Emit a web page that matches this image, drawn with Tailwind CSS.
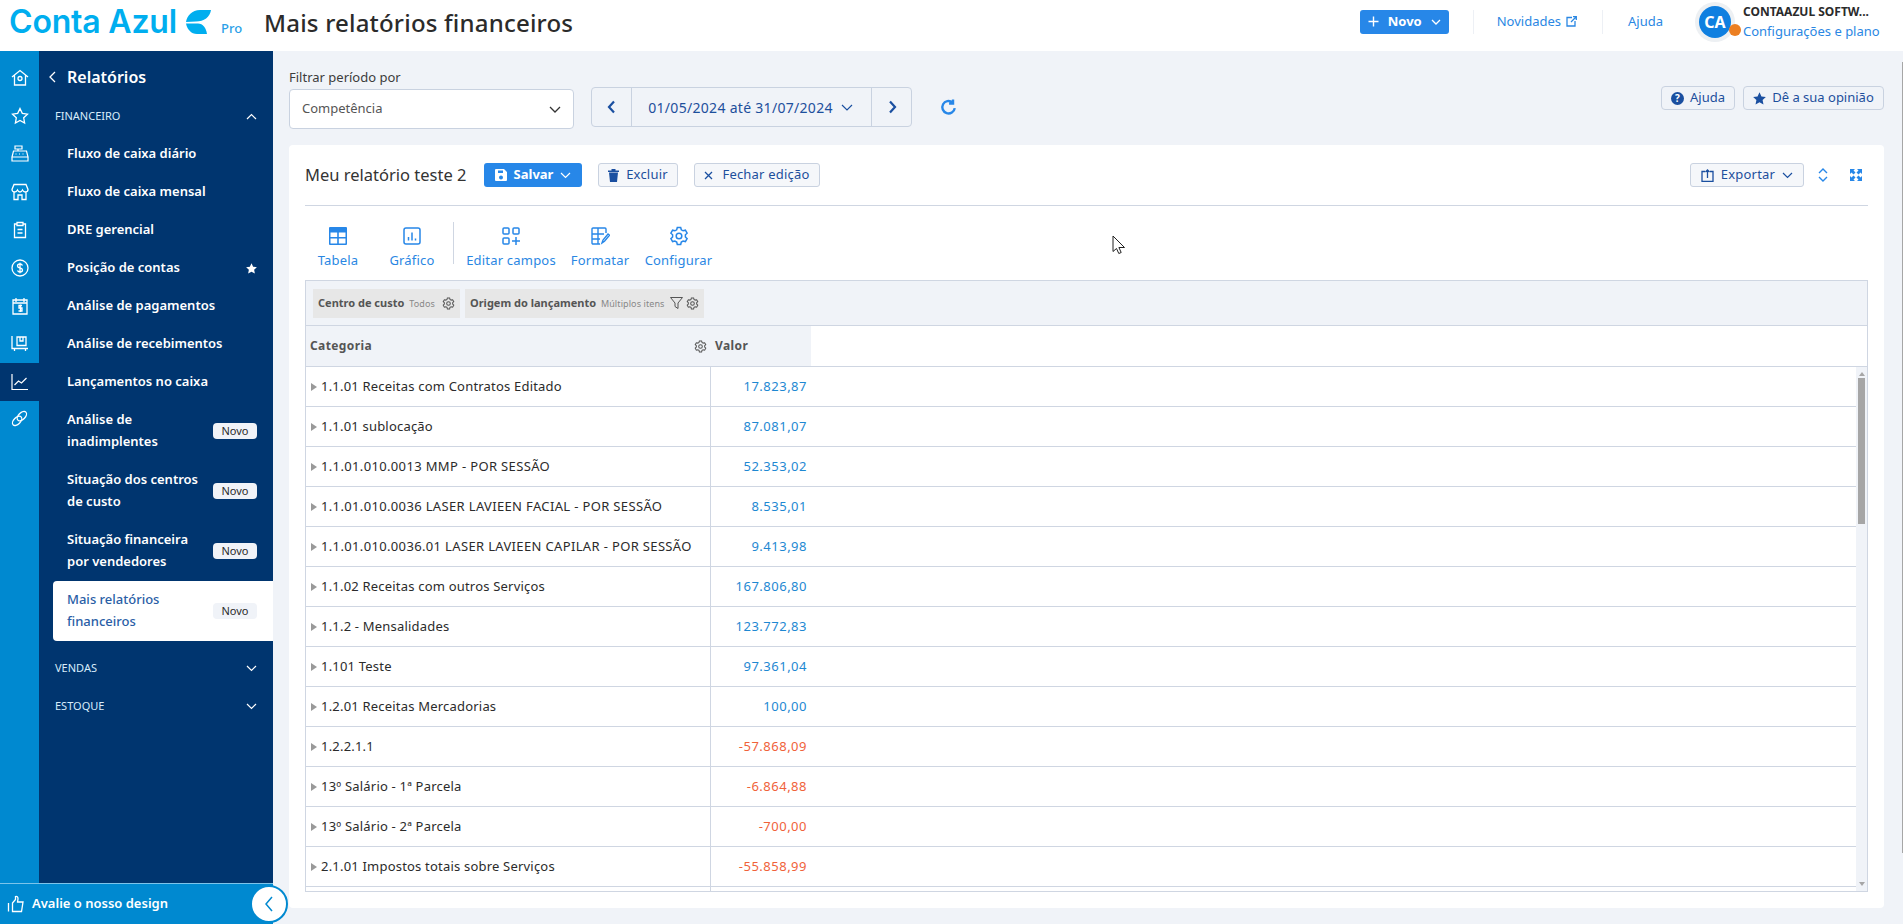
<!DOCTYPE html>
<html lang="pt-BR">
<head>
    <meta charset="UTF-8">
    <title>Mais relatórios financeiros</title>
    <script src="https://cdn.jsdelivr.net/npm/@tailwindcss/browser@4"></script>
</head>
<body class="h-[924px] w-[1903px] overflow-hidden bg-[#f0f3f8] font-['Noto_Sans',sans-serif] text-[13px] relative">

    <!-- topo -->
    <header class="h-[51px] bg-white flex items-center pl-[9px] pr-[19px]">
        <span class="font-['Inter',sans-serif] font-semibold text-[32px] leading-none text-[#00aeef] tracking-[-0.2px] w-[177px] whitespace-nowrap mb-[8px]">Conta Azul</span>
        <svg class="w-[25px] h-[24px] mb-[8px]" viewBox="0 0 25 24" fill="#00aeef"><path d="M0 12C1 6 6 0 14 0H25C24 7 18 11.500 10 11.500z"/><path d="M0 13.500H12C17 13.500 20 18 21 24H11C5 24 1 19 0 13.500z"/></svg>
        <span class="text-[13px] font-medium text-[#2a9fe8] ml-[10px] mt-[7px] w-[43px]">Pro</span>
        <h1 class="text-[24px] leading-none font-medium text-[#2b2b2b] tracking-[0.2px] whitespace-nowrap mb-[5px]">Mais relatórios financeiros</h1>
        <div class="ml-auto flex items-center mb-[8px]">
            <button class="w-[89px] h-[24px] rounded-[3px] bg-[#2787e8] text-white font-bold text-[13px] flex items-center justify-center gap-[9px]">
                <svg class="w-[11px] h-[11px]" viewBox="0 0 11 11" fill="none" stroke="white" stroke-width="1.4"><path d="M5.5 0.5v10M0.5 5.5h10"/></svg>
                Novo
                <svg class="w-[10px] h-[6px]" viewBox="0 0 10 6" fill="none" stroke="white" stroke-width="1.3"><path d="M1 1l4 4 4-4"/></svg>
            </button>
            <div class="w-px h-[24px] bg-[#edf0f5] ml-[24px]"></div>
            <a class="ml-[23px] text-[#2a87e3] flex items-center gap-[5px]">Novidades
                <svg class="w-[11px] h-[11px]" viewBox="0 0 11 11" fill="none" stroke="#2a87e3" stroke-width="1.3"><path d="M6 1.500H1v8.500h8V5M5 6l5-5M7 .7h3.300V4"/></svg>
            </a>
            <div class="w-px h-[24px] bg-[#edf0f5] ml-[25px]"></div>
            <a class="ml-[25px] text-[#2a87e3]">Ajuda</a>
            <div class="ml-[32px] w-[40px] h-[40px] rounded-full bg-[#edf0f3] flex items-center justify-center relative">
                <div class="w-[32px] h-[32px] rounded-full bg-[#0f7fe0] text-white font-bold text-[16px] flex items-center justify-center">CA</div>
                <span class="absolute right-[-6px] top-[22px] w-[12px] h-[12px] rounded-full bg-[#ec7f22]"></span>
            </div>
            <div class="ml-[8px] w-[141px]">
                <div class="font-bold text-[12px] leading-[16px] text-[#2b2b2b] whitespace-nowrap">CONTAAZUL SOFTW...</div>
                <div class="text-[#2a87e3] leading-[18px] mt-[2px] whitespace-nowrap">Configurações e plano</div>
            </div>
        </div>
    </header>

    <div class="flex h-[873px]">
        <!-- barra de icones -->
        <aside class="w-[273px] relative flex">
            <nav class="w-[39px] bg-[#0089d0] flex flex-col pt-[8px]">
                <div class="h-[38px] flex items-center justify-center">
                    <svg class="w-[18px] h-[18px]" viewBox="0 0 18 18" fill="none" stroke="white" stroke-width="1.300"><path d="M1 8l8-6.500L17 8M3.500 6.500V16h11V6.500"/><circle cx="9" cy="9.500" r="2"/></svg>
                </div>
                <div class="h-[38px] flex items-center justify-center">
                    <svg class="w-[18px] h-[18px]" viewBox="0 0 18 18" fill="none" stroke="white" stroke-width="1.300"><path d="M9 1.500l2.300 4.900 5.200.700-3.800 3.700.900 5.300L9 13.500l-4.600 2.600.900-5.300-3.800-3.700 5.200-.700z"/></svg>
                </div>
                <div class="h-[38px] flex items-center justify-center">
                    <svg class="w-[18px] h-[18px]" viewBox="0 0 18 18" fill="none" stroke="white" stroke-width="1.200"><path d="M4 1h7v3H4zM7 4v2M2.500 6h13L17 12H1zM1 12h16v4H1zM4.500 9h1M8 9h1M11.500 9h1"/></svg>
                </div>
                <div class="h-[38px] flex items-center justify-center">
                    <svg class="w-[18px] h-[18px]" viewBox="0 0 18 18" fill="none" stroke="white" stroke-width="1.300"><path d="M3 1.500h12L17 6.500c0 1.500-1 2.500-2.700 2.500S12 8 11.500 7c-.5 1-1.200 2-2.500 2s-2-1-2.500-2C6 8 5.300 9 3.700 9S1 8 1 6.500zM3 9v7.500h4V12h4v4.500h4V9"/></svg>
                </div>
                <div class="h-[38px] flex items-center justify-center">
                    <svg class="w-[18px] h-[18px]" viewBox="0 0 18 18" fill="none" stroke="white" stroke-width="1.300"><path d="M6 3H3.500v13.500h11V3H12M6 1.500h6v3H6zM6.500 8.500h5M6.500 12h5"/></svg>
                </div>
                <div class="h-[38px] flex items-center justify-center">
                    <svg class="w-[18px] h-[18px]" viewBox="0 0 18 18" fill="none" stroke="white" stroke-width="1.300"><circle cx="9" cy="9" r="8"/><path d="M11.500 6.500C11 5.500 10 5 9 5 7.500 5 6.500 6 6.500 7s1 1.700 2.500 2 2.500 1 2.500 2-1 2-2.500 2c-1 0-2-.5-2.500-1.500M9 3.800v10.400"/></svg>
                </div>
                <div class="h-[38px] flex items-center justify-center">
                    <svg class="w-[18px] h-[18px]" viewBox="0 0 18 18" fill="none" stroke="white" stroke-width="1.300"><path d="M2 3h14v14H2zM5 1v4M13 1v4M2 6h14M11 8.500H8v2.500h3v3H7.500M9.500 7.500v7.500"/></svg>
                </div>
                <div class="h-[38px] flex items-center justify-center">
                    <svg class="w-[18px] h-[18px]" viewBox="0 0 18 18" fill="none" stroke="white" stroke-width="1.300"><path d="M1 1v12.500h16M6 2h9v8.500H6zM9 2v4h3V2M3.500 14v2M14.500 14v2"/></svg>
                </div>
                <div class="h-[38px] bg-[#00356f] flex items-center justify-center">
                    <svg class="w-[18px] h-[18px]" viewBox="0 0 18 18" fill="none" stroke="white" stroke-width="1.200"><path d="M1 1v15.500h16M3.500 12l4-4 3 2 5-5"/></svg>
                </div>
                <div class="h-[34px] flex items-center justify-center">
                    <svg class="w-[17px] h-[17px]" viewBox="0 0 18 18" fill="none" stroke="white" stroke-width="1.400"><ellipse cx="6.500" cy="11.500" rx="6" ry="3.500" transform="rotate(-45 6.500 11.500)"/><ellipse cx="11.500" cy="6.500" rx="6" ry="3.500" transform="rotate(-45 11.500 6.500)"/></svg>
                </div>
            </nav>

            <!-- menu -->
            <div class="w-[234px] bg-[#00356f] text-white font-semibold">
                <div class="h-[52px] flex items-center pl-[9px]">
                    <svg class="w-[9px] h-[12px]" viewBox="0 0 9 12" fill="none" stroke="white" stroke-width="1.300"><path d="M7 1L2 6l5 5"/></svg>
                    <span class="ml-[10px] text-[16px]">Relatórios</span>
                </div>
                <div class="h-[26px] flex items-center justify-between pl-[16px] pr-[16px] text-[11px] font-normal text-[#d8ecfb]">FINANCEIRO
                    <svg class="w-[11px] h-[7px]" viewBox="0 0 11 7" fill="none" stroke="white" stroke-width="1.200"><path d="M1 6l4.500-4.500L10 6"/></svg>
                </div>
                <div class="h-[38px] mt-[6px] flex items-center pl-[28px]">Fluxo de caixa diário</div>
                <div class="h-[38px] flex items-center pl-[28px]">Fluxo de caixa mensal</div>
                <div class="h-[38px] flex items-center pl-[28px]">DRE gerencial</div>
                <div class="h-[38px] flex items-center justify-between pl-[28px] pr-[16px]">Posição de contas
                    <svg class="w-[11px] h-[11px]" viewBox="0 0 18 18" fill="white"><path d="M9 .5l2.700 5.600 6.100.8-4.500 4.200 1.200 6.100L9 14.200l-5.500 3 1.200-6.100L.2 6.900l6.100-.8z"/></svg>
                </div>
                <div class="h-[38px] flex items-center pl-[28px]">Análise de pagamentos</div>
                <div class="h-[38px] flex items-center pl-[28px]">Análise de recebimentos</div>
                <div class="h-[38px] flex items-center pl-[28px]">Lançamentos no caixa</div>
                <div class="h-[60px] flex items-center justify-between pl-[28px] pr-[16px] leading-[22px]">
                    <span class="-mt-[2px]">Análise de<br>inadimplentes</span>
                    <span class="w-[44px] h-[16px] rounded-[4px] bg-[#f0f3f8] text-[#2b2b2b] text-[11px] font-normal flex items-center justify-center">Novo</span>
                </div>
                <div class="h-[60px] flex items-center justify-between pl-[28px] pr-[16px] leading-[22px]">
                    <span class="-mt-[2px]">Situação dos centros<br>de custo</span>
                    <span class="w-[44px] h-[16px] rounded-[4px] bg-[#f0f3f8] text-[#2b2b2b] text-[11px] font-normal flex items-center justify-center">Novo</span>
                </div>
                <div class="h-[60px] flex items-center justify-between pl-[28px] pr-[16px] leading-[22px]">
                    <span class="-mt-[2px]">Situação financeira<br>por vendedores</span>
                    <span class="w-[44px] h-[16px] rounded-[4px] bg-[#f0f3f8] text-[#2b2b2b] text-[11px] font-normal flex items-center justify-center">Novo</span>
                </div>
                <div class="h-[60px] ml-[14px] rounded-l-[4px] bg-white text-[#2a5ea6] font-medium flex items-center justify-between pl-[14px] pr-[16px] leading-[22px]">
                    <span class="-mt-[2px]">Mais relatórios<br>financeiros</span>
                    <span class="w-[44px] h-[16px] rounded-[4px] bg-[#f0f3f8] text-[#2b2b2b] text-[11px] font-normal flex items-center justify-center">Novo</span>
                </div>
                <div class="h-[38px] mt-[8px] flex items-center justify-between pl-[16px] pr-[16px] text-[11px] font-normal text-[#d8ecfb]">VENDAS
                    <svg class="w-[11px] h-[7px]" viewBox="0 0 11 7" fill="none" stroke="white" stroke-width="1.200"><path d="M1 1l4.500 4.500L10 1"/></svg>
                </div>
                <div class="h-[38px] flex items-center justify-between pl-[16px] pr-[16px] text-[11px] font-normal text-[#d8ecfb]">ESTOQUE
                    <svg class="w-[11px] h-[7px]" viewBox="0 0 11 7" fill="none" stroke="white" stroke-width="1.200"><path d="M1 1l4.500 4.500L10 1"/></svg>
                </div>
            </div>

            <!-- rodape do menu -->
            <div class="absolute left-0 bottom-0 w-[273px] h-[41px] bg-[#0089d0] border-t border-[#7cc4ea] flex items-center pl-[7px] text-white font-semibold">
                <svg class="w-[18px] h-[18px]" viewBox="0 0 18 18" fill="none" stroke="white" stroke-width="1.300"><path d="M1.500 8v8.500M5.500 8l3-3.500V1.500c1.500-.5 2.500.5 2.500 2S10.500 6.500 10.500 7H16l-1.500 9.500H5.500z"/></svg>
                <span class="ml-[7px]">Avalie o nosso design</span>
                <div class="absolute left-[250px] top-[1px] w-[38px] h-[38px] rounded-full bg-white border-2 border-[#0089d0] flex items-center justify-center">
                    <svg class="w-[10px] h-[18px]" viewBox="0 0 10 18" fill="none" stroke="#0089d0" stroke-width="1.500"><path d="M8 2L2 9l6 7"/></svg>
                </div>
            </div>
        </aside>

        <!-- conteudo -->
        <main class="w-[1630px] pl-[16px] pt-[17px]">
            <div class="w-[1595px] h-[77px] flex items-start">
                <div class="w-[285px]">
                    <label class="block text-[#3c3c3c] leading-[18px]">Filtrar período por</label>
                    <div class="mt-[3px] h-[40px] bg-white border border-[#c9d2e0] rounded-[4px] flex items-center justify-between pl-[12px] pr-[12px] text-[#555]">Competência
                        <svg class="w-[12px] h-[7px]" viewBox="0 0 12 7" fill="none" stroke="#333" stroke-width="1.300"><path d="M1 1l5 5 5-5"/></svg>
                    </div>
                </div>
                <div class="ml-[17px] mt-[19px] w-[321px] h-[40px] border border-[#c9d2e0] rounded-[4px] flex items-center text-[#1d4f9c]">
                    <div class="w-[40px] h-full border-r border-[#c9d2e0] flex items-center justify-center">
                        <svg class="w-[9px] h-[14px]" viewBox="0 0 9 14" fill="none" stroke="#1a4fa0" stroke-width="2.200"><path d="M7 1.500L2 7l5 5.500"/></svg>
                    </div>
                    <div class="flex-1 h-full flex items-center justify-center gap-[8px] text-[14px] tracking-[0.3px] whitespace-nowrap pr-[2px]">01/05/2024 até 31/07/2024
                        <svg class="w-[12px] h-[7px]" viewBox="0 0 12 7" fill="none" stroke="#1a4fa0" stroke-width="1.200"><path d="M1 1l5 5 5-5"/></svg>
                    </div>
                    <div class="w-[40px] h-full border-l border-[#c9d2e0] flex items-center justify-center pl-[2px]">
                        <svg class="w-[9px] h-[14px]" viewBox="0 0 9 14" fill="none" stroke="#1a4fa0" stroke-width="2.200"><path d="M2 1.500L7 7l-5 5.500"/></svg>
                    </div>
                </div>
                <svg class="ml-[28px] mt-[31px] w-[17px] h-[17px]" viewBox="0 0 15 15" fill="none" stroke="#2787e8" stroke-width="2.100"><path d="M13 8a5.500 5.500 0 1 1-2-5M11.500 .5v3.500H8"/></svg>
                <div class="ml-auto mt-[18px] flex gap-[8px] text-[#1d4f9c]">
                    <button class="w-[74px] h-[24px] border border-[#c9d2e0] rounded-[4px] flex items-center justify-center gap-[6px]">
                        <svg class="w-[13px] h-[13px]" viewBox="0 0 13 13"><circle cx="6.500" cy="6.500" r="6.500" fill="#1a4fa0"/><text x="6.500" y="10" text-anchor="middle" font-size="10" font-weight="700" fill="white">?</text></svg>
                        Ajuda
                    </button>
                    <button class="w-[141px] h-[24px] border border-[#c9d2e0] rounded-[4px] flex items-center justify-center gap-[6px]">
                        <svg class="w-[13px] h-[13px]" viewBox="0 0 18 18" fill="#1a4fa0"><path d="M9 .5l2.700 5.600 6.100.8-4.500 4.200 1.200 6.100L9 14.200l-5.500 3 1.200-6.100L.2 6.900l6.100-.8z"/></svg>
                        Dê a sua opinião
                    </button>
                </div>
            </div>

            <!-- cartao do relatorio -->
            <section class="w-[1595px] h-[763px] bg-white rounded-[4px] px-[16px]">
                <div class="h-[61px] border-b border-[#cfd6e2] flex items-center">
                    <h2 class="text-[16.500px] text-[#333] w-[179px] whitespace-nowrap">Meu relatório teste 2</h2>
                    <button class="w-[98px] h-[24px] rounded-[3px] bg-[#2787e8] text-white font-bold flex items-center justify-center gap-[7px]">
                        <svg class="w-[12px] h-[12px]" viewBox="0 0 12 12" fill="white"><path fill-rule="evenodd" d="M1 0h8l3 3v8a1 1 0 0 1-1 1H1a1 1 0 0 1-1-1V1a1 1 0 0 1 1-1zm2 1.500V4h5V1.500zM6 6.500a2 2 0 1 0 0 4 2 2 0 0 0 0-4z"/></svg>
                        Salvar
                        <svg class="w-[11px] h-[7px]" viewBox="0 0 11 7" fill="none" stroke="white" stroke-width="1.200"><path d="M1 1l4.500 4.500L10 1"/></svg>
                    </button>
                    <button class="ml-[16px] w-[80px] h-[24px] border border-[#c9d2e0] bg-[#f5f7fa] rounded-[3px] text-[#1d4f9c] tracking-[0.2px] flex items-center justify-center gap-[7px]">
                        <svg class="w-[11px] h-[13px]" viewBox="0 0 11 13" fill="#1a4fa0"><path d="M0 1.500h11v1.500H0zM3.500 0h4v1.500h-4zM1 3.500h9L9 13H2z"/></svg>
                        Excluir
                    </button>
                    <button class="ml-[16px] w-[126px] h-[24px] border border-[#c9d2e0] bg-[#f5f7fa] rounded-[3px] text-[#1d4f9c] tracking-[0.2px] flex items-center justify-center gap-[9px]">
                        <svg class="w-[9px] h-[9px]" viewBox="0 0 9 9" fill="none" stroke="#1a4fa0" stroke-width="1.300"><path d="M1 1l7 7M8 1L1 8"/></svg>
                        Fechar edição
                    </button>
                    <button class="ml-auto w-[114px] h-[24px] border border-[#c9d2e0] bg-[#f5f7fa] rounded-[3px] text-[#1d4f9c] tracking-[0.2px] flex items-center justify-center gap-[7px]">
                        <svg class="w-[13px] h-[13px]" viewBox="0 0 13 13" fill="none" stroke="#1a4fa0" stroke-width="1.300"><path d="M4 2.500H1v10h11v-10H9M6.500 9V1M4.500 3l2-2 2 2"/></svg>
                        Exportar
                        <svg class="w-[11px] h-[7px]" viewBox="0 0 11 7" fill="none" stroke="#1a4fa0" stroke-width="1.200"><path d="M1 1l4.500 4.500L10 1"/></svg>
                    </button>
                    <svg class="ml-[14px] w-[10px] h-[14px]" viewBox="0 0 10 14" fill="none" stroke="#2787e8" stroke-width="1.400"><path d="M1 5l4-4 4 4M1 9l4 4 4-4"/></svg>
                    <svg class="ml-[22px] mr-[6px] w-[12px] h-[12px]" viewBox="0 0 12 12" fill="#2787e8"><path d="M0 0h5L3.500 1.500 5.500 3.500 3.500 5.500 1.500 3.500 0 5zM12 0v5l-1.500-1.500-2 2-2-2 2-2L7 0zM0 12V7l1.500 1.500 2-2 2 2-2 2L5 12zM12 12H7l1.500-1.500-2-2 2-2 2 2L12 7z"/></svg>
                </div>

                <!-- barra de ferramentas -->
                <div class="h-[74px] pt-[20px] flex text-[#2a87e3] tracking-[0.2px]">
                    <div class="w-[66px] flex flex-col items-center">
                        <svg class="w-[20px] h-[20px]" viewBox="0 0 20 20"><path fill="#2787e8" fill-rule="evenodd" d="M2 1h16a1 1 0 0 1 1 1v16a1 1 0 0 1-1 1H2a1 1 0 0 1-1-1V2a1 1 0 0 1 1-1zm.500 5.500v4.500h6.700V6.500zm8.300 0v4.500h6.700V6.500zM2.500 12.500v5h6.700v-5zm8.300 0v5h6.700v-5z"/></svg>
                        <span class="mt-[5px] leading-[18px]">Tabela</span>
                    </div>
                    <div class="w-[82px] flex flex-col items-center">
                        <svg class="w-[20px] h-[20px]" viewBox="0 0 20 20" fill="none" stroke="#2787e8" stroke-width="1.500"><rect x="2" y="2" width="16" height="16" rx="2"/><path d="M6.500 11v3.500M10 6.500v8M13.500 12.500v2"/></svg>
                        <span class="mt-[5px] leading-[18px]">Gráfico</span>
                    </div>
                    <div class="w-px h-[42px] bg-[#cfd6e2] -mt-[4px]"></div>
                    <div class="ml-[13px] w-[88px] flex flex-col items-center">
                        <svg class="w-[20px] h-[20px]" viewBox="0 0 20 20" fill="none" stroke="#2787e8" stroke-width="1.500"><rect x="2" y="2" width="6" height="6" rx="1"/><rect x="12" y="2" width="6" height="6" rx="1"/><rect x="2" y="12" width="6" height="6" rx="1"/><path d="M15 11v8M11 15h8"/></svg>
                        <span class="mt-[5px] leading-[18px] whitespace-nowrap">Editar campos</span>
                    </div>
                    <div class="ml-[16px] w-[58px] flex flex-col items-center">
                        <svg class="w-[20px] h-[20px]" viewBox="0 0 20 20" fill="none" stroke="#2787e8" stroke-width="1.400"><path d="M10 18H3a1 1 0 0 1-1-1V3a1 1 0 0 1 1-1h12a1 1 0 0 1 1 1v4M2 8h12M8 2v16M2 13h8M12 17l1-3 5-6 1.500 1.300-5 6z"/></svg>
                        <span class="mt-[5px] leading-[18px]">Formatar</span>
                    </div>
                    <div class="ml-[17px] w-[65px] flex flex-col items-center">
                        <svg class="w-[20px] h-[20px]" viewBox="0 0 20 20" fill="none" stroke="#2787e8" stroke-width="1.500"><path d="M8.300 1.500h3.400l.6 2.300 1.800 1 2.300-.6 1.700 3-1.700 1.600v2.200l1.700 1.600-1.700 3-2.300-.6-1.800 1-.6 2.500H8.300l-.6-2.500-1.800-1-2.300.6-1.700-3L3.600 11V8.800L1.900 7.200l1.700-3 2.300.6 1.800-1z"/><circle cx="10" cy="10" r="2.800"/></svg>
                        <span class="mt-[5px] leading-[18px]">Configurar</span>
                    </div>
                </div>

                <!-- tabela dinamica -->
                <div class="w-[1563px] border border-[#cfd6e2] relative">
                    <div class="h-[45px] bg-[#f0f3f8] border-b border-[#cfd6e2] flex items-center pl-[7px] gap-[5px] text-[#555]">
                        <div class="h-[29px] w-[147px] bg-[#e7e7e7] flex items-center justify-between px-[5px]">
                            <span class="font-bold text-[11px]">Centro de custo <span class="font-normal text-[#888] text-[9px] tracking-[0.1px] ml-[2px]">Todos</span></span>
                            <svg class="w-[13px] h-[13px]" viewBox="0 0 20 20" fill="none" stroke="#555" stroke-width="1.600"><path d="M8.300 1.500h3.400l.6 2.300 1.800 1 2.300-.6 1.700 3-1.700 1.600v2.200l1.700 1.600-1.700 3-2.300-.6-1.800 1-.6 2.500H8.300l-.6-2.500-1.800-1-2.300.6-1.700-3L3.600 11V8.800L1.900 7.200l1.700-3 2.300.6 1.800-1z"/><circle cx="10" cy="10" r="2.800"/></svg>
                        </div>
                        <div class="h-[29px] w-[239px] bg-[#e7e7e7] flex items-center px-[5px]">
                            <span class="font-bold text-[11px] whitespace-nowrap">Origem do lançamento <span class="font-normal text-[#888] text-[9px] tracking-[0.1px] ml-[2px]">Múltiplos itens</span></span>
                            <svg class="ml-auto w-[13px] h-[12px]" viewBox="0 0 13 12" fill="none" stroke="#555" stroke-width="1"><path d="M.5.500h12L8 6v5.500L5 9.500V6z"/></svg>
                            <svg class="ml-[3px] w-[13px] h-[13px]" viewBox="0 0 20 20" fill="none" stroke="#555" stroke-width="1.600"><path d="M8.300 1.500h3.400l.6 2.300 1.800 1 2.300-.6 1.700 3-1.700 1.600v2.200l1.700 1.600-1.700 3-2.300-.6-1.800 1-.6 2.500H8.300l-.6-2.500-1.800-1-2.300.6-1.700-3L3.600 11V8.800L1.900 7.200l1.700-3 2.300.6 1.800-1z"/><circle cx="10" cy="10" r="2.800"/></svg>
                        </div>
                    </div>
                    <div class="h-[41px] border-b border-[#cfd6e2] flex">
                        <div class="w-[505px] bg-[#f0f3f8] flex items-center justify-between pl-[4px] pr-[4px] font-bold text-[12px] tracking-[0.4px] text-[#555]">
                            <span>Categoria</span>
                            <span class="flex items-center gap-[8px]">
                                <svg class="w-[13px] h-[13px]" viewBox="0 0 20 20" fill="none" stroke="#555" stroke-width="1.600"><path d="M8.300 1.500h3.400l.6 2.300 1.800 1 2.300-.6 1.700 3-1.700 1.600v2.200l1.700 1.600-1.700 3-2.300-.6-1.800 1-.6 2.500H8.300l-.6-2.500-1.800-1-2.300.6-1.700-3L3.600 11V8.800L1.900 7.200l1.700-3 2.300.6 1.800-1z"/><circle cx="10" cy="10" r="2.800"/></svg>
                                <span class="w-[92px]">Valor</span>
                            </span>
                        </div>
                    </div>
                    <div id="linhas" class="pr-[11px] h-[524px] relative"></div>
                    <!-- barra de rolagem -->
                    <div class="absolute right-0 bottom-0 top-[86px] w-[11px] bg-[#f0f3f8]">
                        <div class="absolute left-[3px] top-[5px] w-0 h-0 border-x-[3px] border-x-transparent border-b-[4px] border-b-[#a6a6a6]"></div>
                        <div class="absolute left-[2px] top-[11px] w-[7px] h-[146px] bg-[#a6a6a6]"></div>
                        <div class="absolute left-[3px] bottom-[5px] w-0 h-0 border-x-[3px] border-x-transparent border-t-[4px] border-t-[#a6a6a6]"></div>
                    </div>
                </div>
            </section>
        </main>
    </div>

    <!-- rolagem da pagina -->
    <div class="absolute right-0 top-[62px] w-px h-[791px] bg-[#a6a6a6]"></div>
    <!-- cursor do mouse -->
    <svg class="absolute left-[1112px] top-[235px] w-[14px] h-[20px]" viewBox="0 0 14 20" fill="white" stroke="#222" stroke-width="1"><path d="M1 1v15.500l3.500-3 2.300 5 2.400-1-2.300-5H12.500z"/></svg>

    <script>
        const linhas = [
            ['1.1.01 Receitas com Contratos Editado', '17.823,87'],
            ['1.1.01 sublocação', '87.081,07'],
            ['1.1.01.010.0013 MMP - POR SESSÃO', '52.353,02', 'tracking-[0.35px]'],
            ['1.1.01.010.0036 LASER LAVIEEN FACIAL - POR SESSÃO', '8.535,01', 'tracking-[0.35px]'],
            ['1.1.01.010.0036.01 LASER LAVIEEN CAPILAR - POR SESSÃO', '9.413,98', 'tracking-[0.35px]'],
            ['1.1.02 Receitas com outros Serviços', '167.806,80'],
            ['1.1.2 - Mensalidades', '123.772,83'],
            ['1.101 Teste', '97.361,04'],
            ['1.2.01 Receitas Mercadorias', '100,00'],
            ['1.2.2.1.1', '-57.868,09'],
            ['13º Salário - 1ª Parcela', '-6.864,88'],
            ['13º Salário - 2ª Parcela', '-700,00'],
            ['2.1.01 Impostos totais sobre Serviços', '-55.858,99'],
            ['', '']
        ];
        const corpo = document.getElementById('linhas');
        linhas.forEach(([nome, valor, espaco = 'tracking-[0.2px]'], i) => {
            const linha = document.createElement('div');
            linha.className = i === 13 ? 'h-[4px] flex' : 'h-[40px] border-b border-[#cfd6e2] flex';
            const cor = valor.startsWith('-') ? 'text-[#f0623a]' : 'text-[#1e88d2]';
            linha.innerHTML = `
                <div class="w-[405px] border-r border-[#cfd6e2] flex items-center pl-[5px] text-[#2b2b2b] ${espaco} whitespace-nowrap">
                    ${nome ? '<span class="w-0 h-0 border-y-[4px] border-y-transparent border-l-[6px] border-l-[#999] mr-[4px]"></span>' : ''}${nome}
                </div>
                <div class="w-[97px] pr-[1px] flex items-center justify-end tracking-[0.5px] ${cor}">${valor}</div>`;
            corpo.appendChild(linha);
        });
    </script>
</body>
</html>
